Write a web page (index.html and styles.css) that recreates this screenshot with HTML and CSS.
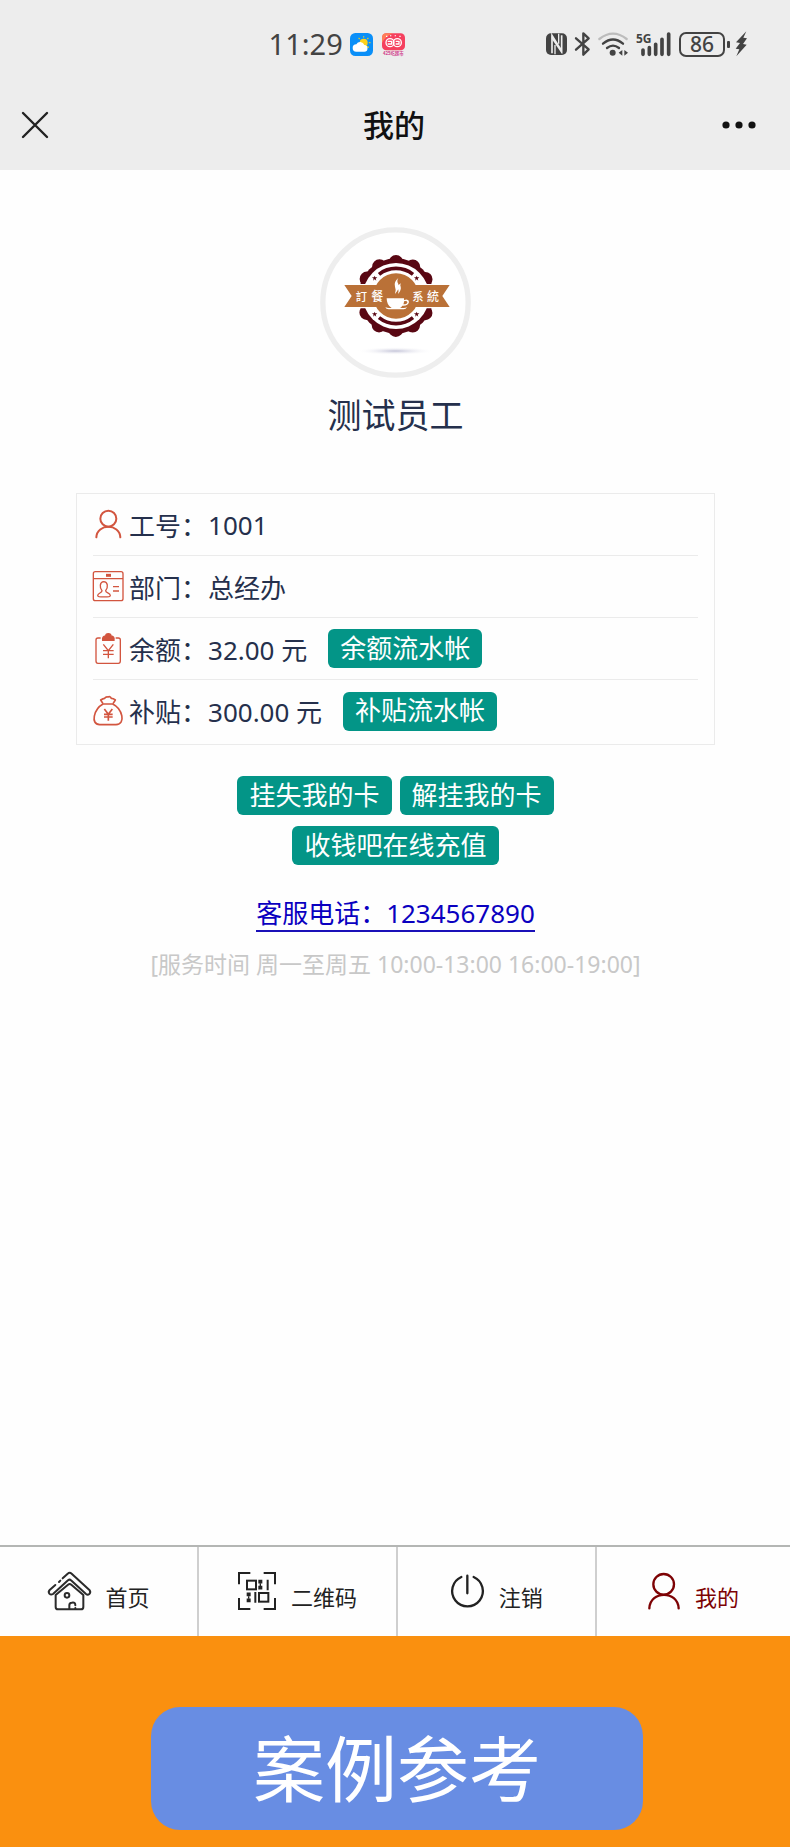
FILE: index.html
```html
<!DOCTYPE html>
<html lang="zh-CN">
<head>
<meta charset="utf-8">
<meta name="viewport" content="width=device-width, initial-scale=1">
<title>我的</title>
<link rel="stylesheet" href="styles.css">
</head>
<body>
<header class="top">
  <div class="status">
    <div class="status-left">
      <span class="time">11:29</span>
      <svg class="app-icon" viewBox="0 0 69 69" aria-hidden="true">
        <rect width="69" height="69" rx="16" fill="#0a8ff8"/>
        <circle cx="41" cy="29" r="12" fill="#ffd21c"/>
        <g stroke="#d8c832" stroke-width="4" stroke-linecap="round"><path d="M41 12v-1M53 17l1-1M58 29h2M53 41l2 2M28 17l-1-1"/></g>
        <path d="M19 56a11 11 0 0 1 0-22 13 13 0 0 1 24 2 10 10 0 0 1-1 20z" fill="#fff"/>
      </svg>
      <svg class="app-icon app-icon-second" viewBox="0 0 69 69" aria-hidden="true">
        <rect y="1" width="69" height="51" rx="13" fill="#f5405e"/>
        <path d="M0 30V14Q0 1 13 1h20Q10 10 0 30z" fill="#ff7d58"/>
        <g fill="none" stroke="#fff" stroke-width="4"><circle cx="24" cy="29" r="12"/><circle cx="46" cy="29" r="12"/><path d="M17 25h12v8H17M41 25h10v8H41"/><path d="M14 12v-4M26 10V7M40 10V7M54 12V8"/></g>
        <text x="34" y="66" text-anchor="middle" font-size="13" font-weight="700" fill="#d0408c">425吃超市</text>
      </svg>
    </div>
    <div class="status-right">
      <svg width="21" height="24" viewBox="435 94 63 72" aria-hidden="true">
        <rect x="435" y="98" width="63" height="65" rx="15" fill="#434343"/>
        <path d="M453 158v-54l29 47v-47" fill="none" stroke="#ededed" stroke-width="5"/>
        <path d="M452 104l31 48v8l-31-46z" fill="#ededed"/>
        <path d="M462 133v28M473 99v30" stroke="#ededed" stroke-width="4"/>
      </svg>
      <svg width="15" height="24" viewBox="524 94 45 72" aria-hidden="true">
        <path d="M527 113l38 33-16 16V98l16 15-38 34" fill="none" stroke="#434343" stroke-width="7" stroke-linejoin="round" stroke-linecap="round"/>
      </svg>
      <svg width="30" height="24" viewBox="595 94 90 72" aria-hidden="true">
        <g fill="none" stroke-width="7" stroke-linecap="round"><path d="M599 115q41-32 82 0" stroke="#bcbcbc"/><path d="M610 129q30-25 60 0M622 142q18-14 36 0" stroke="#434343"/></g>
        <circle cx="639" cy="156" r="9" fill="#434343"/>
        <path d="M668 148v17l-11-9zM674 148v17l11-9z" fill="#434343"/>
      </svg>
      <svg width="35" height="30" viewBox="709 85 105 90" aria-hidden="true">
        <text x="709" y="128" font-size="36" font-weight="700" fill="#434343">5G</text>
        <path d="M730 148v13M749 141v20M768 131v30M787 116v45M807 100v61" stroke="#434343" stroke-width="11" stroke-linecap="round"/>
      </svg>
      <span class="battery">86</span>
      <svg width="12" height="26" viewBox="1003 92 36 78" aria-hidden="true">
        <path d="M1037 93l-31 33 12 2-13 17 11 2-9 21 31-35-11-2 12-17-11-2z" fill="#434343"/>
      </svg>
    </div>
  </div>
  <div class="titlebar">
    <button class="icon-button" type="button" aria-label="关闭">
      <svg width="26" height="26" viewBox="0 0 26 26"><path d="M1 1l24 24M25 1L1 25" stroke="#222" stroke-width="2.400" stroke-linecap="round"/></svg>
    </button>
    <h1 class="title">我的</h1>
    <button class="icon-button icon-button-end" type="button" aria-label="更多">
      <svg width="34" height="8" viewBox="0 0 34 8" fill="#111"><circle cx="4" cy="4" r="3.600"/><circle cx="17" cy="4" r="3.600"/><circle cx="30" cy="4" r="3.600"/></svg>
    </button>
  </div>
</header>

<main class="content">
  <svg class="avatar" viewBox="29 36 453 453" role="img" aria-label="订餐系统">
    <defs>
      <radialGradient id="shade"><stop offset="0" stop-color="#c4c4d8"/><stop offset="1" stop-color="#fff" stop-opacity="0"/></radialGradient>
      <path id="star" d="M0-8l2 5 6 0-5 4 2 6-5-4-5 4 2-6-5-4 6 0z"/>
    </defs>
    <circle cx="255.500" cy="262.500" r="218" fill="#fff" stroke="#eee" stroke-width="16"/>
    <ellipse cx="255" cy="408" rx="116" ry="12" fill="url(#shade)"/>
    <circle cx="257" cy="243" r="113" fill="#590713"/>
    <circle cx="257" cy="243" r="101" fill="none" stroke="#590713" stroke-width="44" stroke-linecap="round" stroke-dasharray="0 52.883" transform="rotate(-90 257 243)"/>
    <circle cx="257" cy="243" r="99" fill="#fff"/>
    <g fill="none" stroke="#590713" stroke-width="11"><path d="M206 178a82 82 0 0 1 102 0M206 308a82 82 0 0 0 102 0"/></g>
    <path d="M120 207h274v73H120z" fill="#fff"/>
    <circle cx="257" cy="243" r="68" fill="#ba7137"/>
    <path d="M102 210h316l-22 33 22 33H102l22-33z" fill="#ba7137"/>
    <g fill="#590713"><use href="#star" x="193" y="190"/><use href="#star" x="319" y="190"/><use href="#star" x="193" y="298"/><use href="#star" x="319" y="298"/></g>
    <path d="M229 250h52v5q15-5 15 6-2 12-20 11-4 7-8 7h12q6 0 10-3-3 7-10 7h-45q-8 0-10-7 5 3 11 3h8q-15-8-15-29zM281 259q0 6-2 9 13 0 12-7-2-5-10-2z" fill="#fff" fill-rule="evenodd"/>
    <path d="M264 189q-6 9 0 18 5 13-10 30 4-14 0-22-5-13 10-26zM272 205q-4 5-1 10 3 9-8 22 3-10 0-17-2-9 9-15z" fill="#fff"/>
    <g class="avatar-text" fill="#fff"><text x="136" y="257" font-size="34">訂</text><text x="183" y="257" font-size="36">餐</text><text x="306" y="257" font-size="34">系</text><text x="350" y="257" font-size="36">統</text></g>
  </svg>
  <h2 class="name">测试员工</h2>

  <dl class="card">
    <div class="row">
      <dt class="label">
        <svg class="row-icon" viewBox="97 90 90 90" stroke-width="6" stroke-linecap="round"><circle cx="143" cy="116" r="24"/><path d="M107 172c2-42 70-42 72 0"/></svg>
        工号：</dt>
      <dd class="value">1001</dd>
    </div>
    <div class="row">
      <dt class="label">
        <svg class="row-icon" viewBox="97 275 90 90" stroke-width="4"><rect x="98" y="274" width="89" height="87" rx="6"/><path d="M98 295h89M157 319h18M157 332h18"/><path d="M136 285h15" stroke-width="9"/><path d="M124 331c-8-10-7-26 5-27 13 0 14 17 6 27 0 8 14 5 14 15 0 5-38 5-38 0 0-9 13-7 13-15z"/></svg>
        部门：</dt>
      <dd class="value">总经办</dd>
    </div>
    <div class="row">
      <dt class="label">
        <svg class="row-icon" viewBox="97 458 90 90" stroke-width="4"><path d="M120 470h-8q-6 0-6 6v63q0 7 6 7h61q6 0 6-7v-63q0-6-6-6h-8"/><path d="M126 477q-2-12 9-13 0-7 8-7t8 7q11 1 9 13z" fill="#d2553f"/><path d="M128 489l15 19 15-19M127 508h32M127 519h32M143 508v23"/></svg>
        余额：</dt>
      <dd class="value">32.00 元 <button class="btn" type="button">余额流水帐</button></dd>
    </div>
    <div class="row">
      <dt class="label">
        <svg class="row-icon" viewBox="97 644 90 90" stroke-width="5" stroke-linejoin="round"><path d="M127 668c-27 15-39 61-10 62h49c31-1 19-48-10-62z"/><path d="M127 667l-7-11q7-5 12-5 4-6 10-4 6-4 10 4 6 0 12 5l-7 11"/><path d="M131 683l12 16 12-16M130 699h26M130 707h26M143 699v19"/></svg>
        补贴：</dt>
      <dd class="value">300.00 元 <button class="btn" type="button">补贴流水帐</button></dd>
    </div>
  </dl>

  <div class="actions">
    <div class="actions-line">
      <button class="btn" type="button">挂失我的卡</button>
      <button class="btn" type="button">解挂我的卡</button>
    </div>
    <div class="actions-line">
      <button class="btn" type="button">收钱吧在线充值</button>
    </div>
  </div>

  <a class="phone" href="tel:1234567890">客服电话：1234567890</a>
  <p class="hours">[服务时间 周一至周五 10:00-13:00 16:00-19:00]</p>
</main>

<nav class="tabs">
  <a class="tab" href="#home">
    <svg width="43" height="38" viewBox="138 127 129 114" fill="none" stroke="#2b2b2b" stroke-width="6" stroke-linecap="round" stroke-linejoin="round"><path d="M182 146l15-14q6-5 12 0l54 50q4 6-1 11-5 4-10 0l-45-41q-4-4-9 0l-45 41q-6 4-11-1-4-6 1-11l17-15M171 157l4-4"/><path d="M161 196v36q0 7 7 7h69q7 0 7-7v-36l-36-31q-5-4-10 0z"/><circle cx="195" cy="197" r="7"/><path d="M202 238v-11q0-8 7-8 11-3 11 8M220 235v2"/></svg>
    首页</a>
  <a class="tab" href="#code">
    <svg width="38" height="38" viewBox="709 127 114 114" fill="none" stroke="#222" stroke-width="6"><path d="M712 164v-34h34M786 130h34v34M712 205v33h34M786 238h34v-33"/><rect x="736" y="153" width="27" height="26"/><rect x="772" y="190" width="28" height="26"/><path d="M798 150v32M761 187v32"/><path d="M770 156h12M770 174h12M735 194h12M735 212h12" stroke-width="11"/><path d="M776 161v9M741 200v7" stroke-width="4"/></svg>
    二维码</a>
  <a class="tab" href="#logout">
    <svg width="33" height="38" viewBox="177 127 99 114" fill="none" stroke="#222" stroke-width="7" stroke-linecap="round"><path d="M208 142a46 46 0 1 0 37 0M226 138v53"/></svg>
    注销</a>
  <a class="tab" href="#me" aria-current="page">
    <svg width="32" height="38" viewBox="777 127 96 114" fill="none" stroke="#7d0204" stroke-width="7" stroke-linecap="round"><circle cx="824" cy="164" r="31"/><path d="M781 236c3-54 85-54 88 0"/></svg>
    我的</a>
</nav>

<footer class="banner"><p class="banner-label">案例参考</p></footer>
</body>
</html>
```
FILE: styles.css
```css
* { box-sizing: border-box; }

body {
  margin: 0;
  min-height: 100vh;
  display: flex;
  flex-direction: column;
  background: #fefefe;
  color: #25304c;
  font-family: "Noto Sans", "Noto Sans CJK SC", sans-serif;
  font-size: 26px;
}

h1, h2, p, dl, dd { margin: 0; }

button {
  border: 0;
  font: inherit;
  cursor: pointer;
}

svg {
  flex: none;
  overflow: visible;
}

.top { background: #ededed; }

.status {
  display: flex;
  align-items: center;
  justify-content: space-between;
  height: 80px;
  padding: 8px 43px 0 34%;
  color: #434343;
}

.status-left { display: flex; align-items: center; gap: 7px; }

.time { font-size: 29px; line-height: 36px; }

.app-icon { width: 23px; height: 23px; }

.app-icon-second { margin-left: 2px; }

.status-right { display: flex; align-items: center; gap: 8px; }

.battery {
  position: relative;
  width: 46px;
  height: 25px;
  margin-right: 2px;
  border: 2px solid #434343;
  border-radius: 7px;
  font-size: 21px;
  font-weight: 500;
  line-height: 21px;
  text-align: center;
}

.battery::after {
  content: "";
  position: absolute;
  top: 7px;
  right: -7px;
  width: 3px;
  height: 7px;
  border-radius: 1px;
  background: #434343;
}

.titlebar {
  display: grid;
  grid-template-columns: 1fr auto 1fr;
  align-items: center;
  height: 90px;
  padding: 0 34px 0 22px;
}

.icon-button {
  display: flex;
  justify-self: start;
  padding: 0;
  background: none;
}

.icon-button-end { justify-self: end; }

.title {
  padding-left: 10px;
  color: #111;
  font-size: 31px;
  font-weight: 500;
  line-height: 38px;
}

.content {
  flex: 1;
  display: flex;
  flex-direction: column;
  align-items: center;
  padding: 57px 75px 57px 76px;
}

.avatar { width: 151px; height: 151px; }

.avatar-text { font-family: "Noto Sans CJK TC", sans-serif; font-weight: 500; }

.name {
  margin-top: 13px;
  font-size: 34px;
  font-weight: 400;
  line-height: 48px;
}

.card {
  width: 100%;
  margin-top: 54px;
  padding: 0 16px 2px;
  border: 1px solid #ebebeb;
}

.row {
  display: flex;
  align-items: center;
  height: 62px;
  border-bottom: 1px solid #ebebeb;
}

.row:last-child { border-bottom: 0; }

.label {
  display: flex;
  align-items: center;
  gap: 6px;
}

.row-icon {
  width: 30px;
  height: 30px;
  fill: none;
  stroke: #d2553f;
}

.value {
  display: flex;
  align-items: center;
  gap: 21px;
  padding-left: 1px;
}

.btn {
  height: 39px;
  padding: 0 12px 2px;
  border-radius: 6px;
  background: #039587;
  color: #fff;
  line-height: 36px;
}

.actions {
  display: flex;
  flex-direction: column;
  align-items: center;
  gap: 11px;
  margin-top: 31px;
}

.actions-line { display: flex; gap: 8px; }

.phone {
  margin-top: 31px;
  border-bottom: 2px solid #1a10b8;
  color: #0a00c0;
  line-height: 34px;
  text-decoration: none;
}

.hours {
  margin-top: 17px;
  color: #c8c8c8;
  font-size: 23px;
  line-height: 30px;
}

.tabs {
  display: grid;
  grid-template-columns: repeat(3, 25.2%) 1fr;
  border-top: 2px solid #b4b6b4;
}

.tab {
  display: flex;
  align-items: flex-end;
  justify-content: center;
  gap: 15px;
  height: 89px;
  padding-bottom: 26px;
  border-right: 2px solid #cfcfcf;
  color: #222;
  font-size: 22px;
  line-height: 26px;
  text-decoration: none;
}

.tab:last-child { border-right: 0; }

.tab[aria-current] { color: #7d0204; }

.banner {
  padding: 71px 147px 17px 151px;
  background: #fa900f;
}

.banner-label {
  padding-bottom: 8px;
  border-radius: 29px;
  background: #688de3;
  color: #fff;
  font-family: "Noto Sans CJK SC", sans-serif;
  font-size: 72px;
  line-height: 115px;
  text-align: center;
}
```
